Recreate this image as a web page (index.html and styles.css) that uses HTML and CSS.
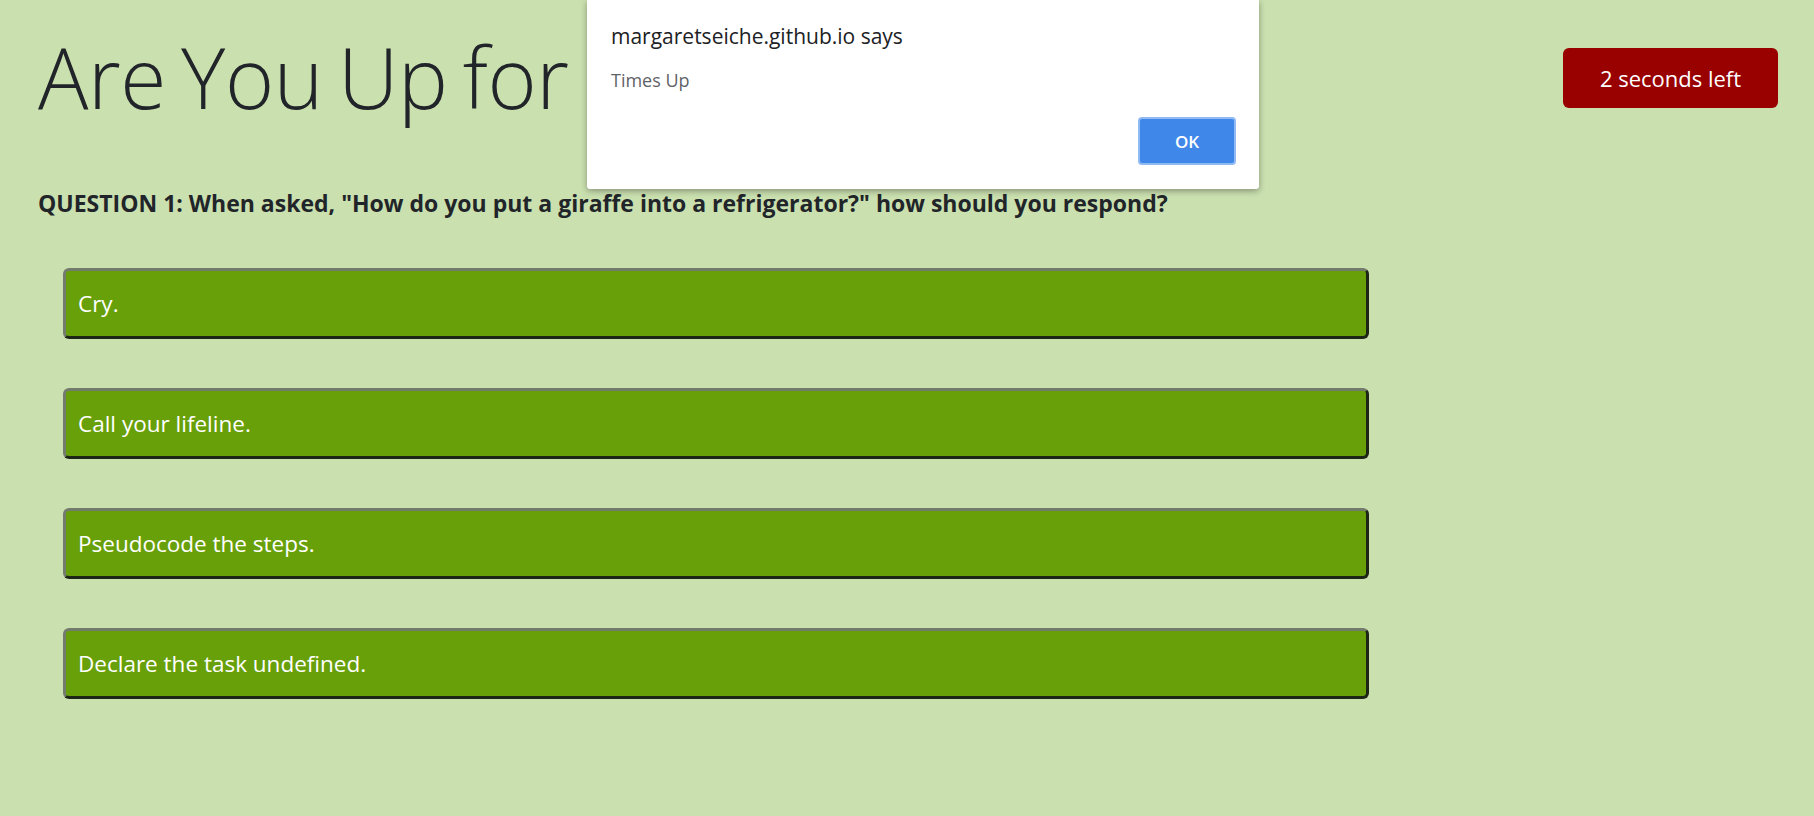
FILE: index.html
```html
<!DOCTYPE html>
<html lang="en">
<head>
<meta charset="utf-8">
<title>Are You Up for the Challenge?</title>
<link rel="stylesheet" href="styles.css">
</head>
<body>
<div class="page">
  <header class="top">
    <h1 class="title">Are You Up for <span class="title-rest">the Challenge?</span></h1>
    <div class="timer">2 seconds left</div>
  </header>
  <h2 class="question">QUESTION 1: When asked, "How do you put a giraffe into a refrigerator?" how should you respond?</h2>
  <div class="answers">
    <button class="answer">Cry.</button>
    <button class="answer">Call your lifeline.</button>
    <button class="answer">Pseudocode the steps.</button>
    <button class="answer">Declare the task undefined.</button>
  </div>
</div>
<div class="dialog">
  <div class="dialog-title">margaretseiche.github.io says</div>
  <div class="dialog-msg">Times Up</div>
  <div class="dialog-actions"><button class="dialog-ok">OK</button></div>
</div>
</body>
</html>
```

FILE: styles.css
```css
html, body {
  margin: 0;
  padding: 0;
}
body {
  background: #cae0af;
  font-family: "Open Sans", "Noto Sans", sans-serif;
  color: #212529;
  width: 1814px;
  height: 816px;
  overflow: hidden;
  position: relative;
}
.page {
  padding: 0 36px 0 38px;
}
.top {
  display: flex;
  justify-content: space-between;
  align-items: flex-start;
  height: 150px;
}
.title {
  margin: 27px 0 0 0;
  font-weight: 300;
  font-size: 84px;
  line-height: 1.2;
  letter-spacing: -0.5px;
  word-spacing: -6px;
  white-space: nowrap;
  overflow: hidden;
  width: 1000px;
}
.title-rest {
  margin-left: 16px;
}
.timer {
  margin-top: 48px;
  width: 215px;
  height: 60px;
  box-sizing: border-box;
  background: #990000;
  color: #fff;
  border-radius: 6px;
  display: flex;
  align-items: center;
  justify-content: center;
  font-size: 22px;
}
.question {
  margin: 40px 0 0 0;
  font-size: 23px;
  font-weight: 700;
  line-height: 1.2;
}
.answers {
  display: flex;
  flex-direction: column;
  gap: 49px;
  margin-top: 50px;
  padding-left: 25px;
}
.answer {
  width: 1306px;
  height: 71px;
  box-sizing: border-box;
  background: #68a00a;
  border-style: solid;
  border-width: 3px;
  border-color: #737b6c #1d2616 #1d2616 #737b6c;
  border-radius: 6px;
  color: #fff;
  font-family: "Open Sans", "Noto Sans", sans-serif;
  font-size: 22.5px;
  text-align: left;
  padding: 0 0 0 12px;
}
.dialog {
  position: absolute;
  left: 587px;
  top: 0;
  width: 672px;
  height: 189px;
  box-sizing: border-box;
  background: #fff;
  border-radius: 0 0 3px 3px;
  box-shadow: 0 2px 6px rgba(0,0,0,0.35);
  padding: 23px 23px 24px 24px;
  display: flex;
  flex-direction: column;
}
.dialog-title {
  font-size: 21px;
  color: #202124;
  line-height: 26px;
}
.dialog-msg {
  margin-top: 20px;
  font-size: 18px;
  color: #5f6368;
  line-height: 22px;
}
.dialog-actions {
  margin-top: auto;
  display: flex;
  justify-content: flex-end;
}
.dialog-ok {
  width: 98px;
  height: 48px;
  background: #3f87e8;
  border: 2px solid #8fbaf3;
  border-radius: 4px;
  color: #fff;
  font-family: "Open Sans", "Noto Sans", sans-serif;
  font-weight: 600;
  font-size: 17px;
}
```
